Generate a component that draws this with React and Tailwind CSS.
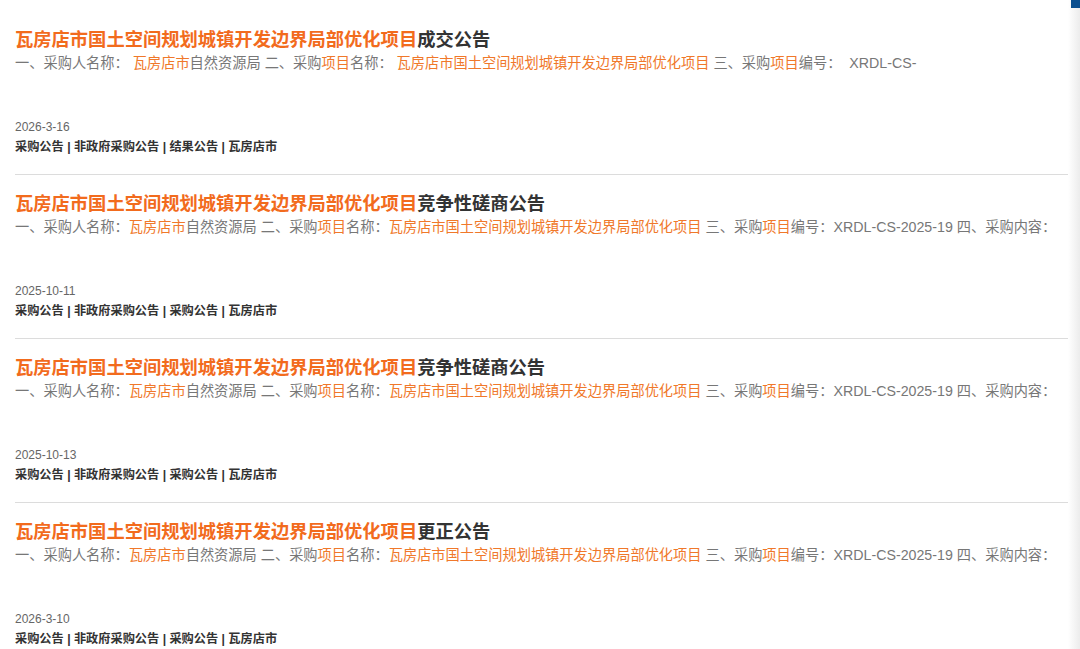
const items = [
  {
    rest: "成交公告",
    spaced: true,
    tail: "XRDL-CS-",
    date: "2026-3-16",
    tags: ["采购公告", "非政府采购公告", "结果公告", "瓦房店市"],
  },
  {
    rest: "竞争性磋商公告",
    tail: "XRDL-CS-2025-19 四、采购内容：",
    date: "2025-10-11",
    tags: ["采购公告", "非政府采购公告", "采购公告", "瓦房店市"],
  },
  {
    rest: "竞争性磋商公告",
    tail: "XRDL-CS-2025-19 四、采购内容：",
    date: "2025-10-13",
    tags: ["采购公告", "非政府采购公告", "采购公告", "瓦房店市"],
  },
  {
    rest: "更正公告",
    tail: "XRDL-CS-2025-19 四、采购内容：",
    date: "2026-3-10",
    tags: ["采购公告", "非政府采购公告", "采购公告", "瓦房店市"],
  },
];

const hl = "text-[#f0782a]";

function Snippet({ spaced, tail }) {
  const gap = spaced ? "\u00a0" : "";
  return (
    <p className="h-[64px] text-[14.22px] leading-[20px] text-[#777] whitespace-nowrap overflow-hidden">
      一、采购人名称：{gap}
      <span className={hl}>瓦房店市</span>自然资源局 二、采购
      <span className={hl}>项目</span>名称：{gap}
      <span className={hl}>瓦房店市国土空间规划城镇开发边界局部优化项目</span> 三、采购
      <span className={hl}>项目</span>编号：{spaced ? "\u00a0\u00a0" : ""}
      {tail}
    </p>
  );
}

export default function App() {
  return (
    <div
      className="relative min-h-screen w-full bg-white overflow-hidden"
      style={{ fontFamily: '"Liberation Sans", Arial, "Noto Sans CJK SC", sans-serif' }}
    >
      <div className="absolute top-0 right-0 h-full w-[12px] bg-gradient-to-r from-white to-[#ececec]" />
      <div className="absolute top-0 right-0 h-[8px] w-[9px] bg-[#0b4f8f]" />
      <div className="pt-[11px] pl-[15px] pr-[10px]">
        {items.map((it, i) => (
          <div key={i} className="pt-4 pb-[17px] border-b border-[#dcdcdc]">
            <h2 className="text-[18.3px] leading-[26px] font-bold whitespace-nowrap">
              <span className="text-[#f26b1d]">瓦房店市国土空间规划城镇开发边界局部优化项目</span>
              <span className="text-[#333]">{it.rest}</span>
            </h2>
            <Snippet spaced={it.spaced} tail={it.tail} />
            <div className="text-[12px] leading-[20px] text-[#666]">{it.date}</div>
            <div className="text-[12.2px] leading-[20px] font-bold text-[#333]">
              {it.tags.join(" | ")}
            </div>
          </div>
        ))}
      </div>
    </div>
  );
}
